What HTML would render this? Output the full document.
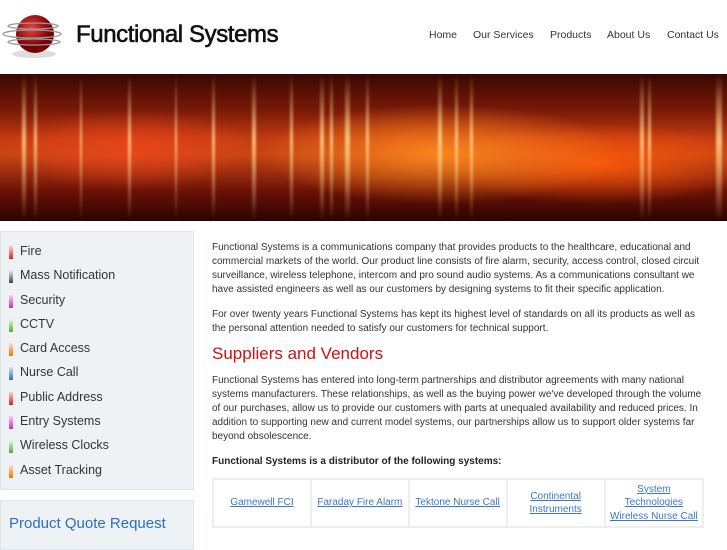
<!DOCTYPE html>
<html><head><meta charset="utf-8"><style>
*{margin:0;padding:0;box-sizing:border-box}
body{width:727px;height:545px;overflow:hidden;background:#fff;font-family:"Liberation Sans",Arial,sans-serif;position:relative}
.logo{position:absolute;left:76px;top:21px;font-size:24px;font-weight:normal;color:#111;-webkit-text-stroke:0.6px #111;letter-spacing:-0.4px}
.nav{position:absolute;top:29px;font-size:10.5px;color:#333;font-family:"Liberation Sans",Arial,sans-serif}
.banner{position:absolute;left:0;top:74px;width:727px;height:147px;overflow:hidden;
background:radial-gradient(ellipse 180px 50px at 440px 80px,rgba(255,140,30,.9),rgba(255,80,10,0) 100%),
radial-gradient(ellipse 160px 40px at 600px 90px,rgba(255,90,10,.9),rgba(255,60,0,0)),
radial-gradient(ellipse 130px 40px at 130px 75px,rgba(240,70,30,.8),rgba(200,40,20,0)),
linear-gradient(#3a0602 0%,#7a1a08 25%,#c63d10 45%,#c84514 55%,#6a1206 80%,#2a0402 100%)}
.s{position:absolute;top:0;height:147px;background:linear-gradient(rgba(255,220,150,0),rgba(255,220,150,.8) 45%,rgba(255,220,150,0));filter:blur(1px)}
.side{position:absolute;left:0;width:194px;background:#eef2f5;border:1px solid #e0e5ea}
.side li{list-style:none;height:24.3px;font-size:12.5px;color:#333;padding-left:19px;position:relative;line-height:24px}
.side li i{position:absolute;left:8px;top:7px;width:4px;height:13px}
.main{position:absolute;left:212px;top:241px;width:492px;font-size:10px;line-height:14px;color:#333}
.main p{margin-bottom:11px}
h2{font-size:17px;font-weight:normal;color:#d01010;margin:1px 0 13px}
table{border-collapse:separate;border-spacing:2px;background:#eee;width:492px}
td{background:#fff;height:46px;text-align:center;font-size:10px;color:#3a78c0;text-decoration:underline;width:97px;line-height:13.5px;padding:0 2px}
</style></head><body>
<svg style="position:absolute;left:2px;top:12px" width="66" height="50" viewBox="0 0 66 50">
<ellipse cx="32" cy="42" rx="22" ry="4" fill="#ddd"/>
<radialGradient id="g" cx="40%" cy="35%"><stop offset="0" stop-color="#f04040"/><stop offset="1" stop-color="#700"/></radialGradient>
<circle cx="33" cy="22" r="19" fill="url(#g)"/>
<g fill="none" stroke="#999" stroke-width="1.3"><ellipse cx="31" cy="14" rx="25" ry="3"/><ellipse cx="30" cy="22" rx="29" ry="4"/><ellipse cx="32" cy="30" rx="26" ry="3"/></g></svg>
<div class="logo">Functional Systems</div>
<div class="nav" style="left:429px">Home</div>
<div class="nav" style="left:473px">Our Services</div>
<div class="nav" style="left:550px">Products</div>
<div class="nav" style="left:607px">About Us</div>
<div class="nav" style="left:667px">Contact Us</div>
<div class="banner">
<div class="s" style="left:22px;width:4px"></div><div class="s" style="left:34px;width:3px"></div>
<div class="s" style="left:80px;width:2px"></div><div class="s" style="left:128px;width:3px"></div>
<div class="s" style="left:175px;width:2px"></div><div class="s" style="left:212px;width:3px"></div>
<div class="s" style="left:252px;width:4px"></div><div class="s" style="left:290px;width:3px"></div>
<div class="s" style="left:320px;width:4px"></div><div class="s" style="left:330px;width:3px"></div>
<div class="s" style="left:345px;width:5px"></div><div class="s" style="left:366px;width:3px"></div>
<div class="s" style="left:438px;width:4px"></div><div class="s" style="left:455px;width:3px"></div>
<div class="s" style="left:470px;width:3px"></div><div class="s" style="left:640px;width:4px"></div>
<div class="s" style="left:648px;width:3px"></div><div class="s" style="left:716px;width:6px"></div>
</div>
<div class="side" style="top:231px;height:259px;padding-top:7px"><ul>
<li><i style="background:linear-gradient(#fcc,#d22)"></i>Fire</li>
<li><i style="background:linear-gradient(#eee,#444)"></i>Mass Notification</li>
<li><i style="background:linear-gradient(#fcf,#b3b)"></i>Security</li>
<li><i style="background:linear-gradient(#dfd,#5a3)"></i>CCTV</li>
<li><i style="background:linear-gradient(#fdc,#e70)"></i>Card Access</li>
<li><i style="background:linear-gradient(#ddf,#27b)"></i>Nurse Call</li>
<li><i style="background:linear-gradient(#fcc,#d22)"></i>Public Address</li>
<li><i style="background:linear-gradient(#fcf,#b3b)"></i>Entry Systems</li>
<li><i style="background:linear-gradient(#dfd,#5a3)"></i>Wireless Clocks</li>
<li><i style="background:linear-gradient(#fdc,#e70)"></i>Asset Tracking</li>
</ul></div>
<div class="side" style="top:500px;height:50px;padding:14px 0 0 8px;font-size:15px;color:#2a70b8">Product Quote Request</div>
<div class="main">
<p>Functional Systems is a communications company that provides products to the healthcare, educational and commercial markets of the world. Our product line consists of fire alarm, security, access control, closed circuit surveillance, wireless telephone, intercom and pro sound audio systems. As a communications consultant we have assisted engineers as well as our customers by designing systems to fit their specific application.</p>
<p>For over twenty years Functional Systems has kept its highest level of standards on all its products as well as the personal attention needed to satisfy our customers for technical support.</p>
<h2>Suppliers and Vendors</h2>
<p>Functional Systems has entered into long-term partnerships and distributor agreements with many national systems manufacturers. These relationships, as well as the buying power we've developed through the volume of our purchases, allow us to provide our customers with parts at unequaled availability and reduced prices. In addition to supporting new and current model systems, our partnerships allow us to support older systems far beyond obsolescence.</p>
<p style="font-weight:bold;color:#222;margin-bottom:9px">Functional Systems is a distributor of the following systems:</p>
<table><tr><td>Gamewell FCI</td><td>Faraday Fire Alarm</td><td>Tektone Nurse Call</td><td>Continental Instruments</td><td>System Technologies Wireless Nurse Call</td></tr></table>
</div>
</body></html>
